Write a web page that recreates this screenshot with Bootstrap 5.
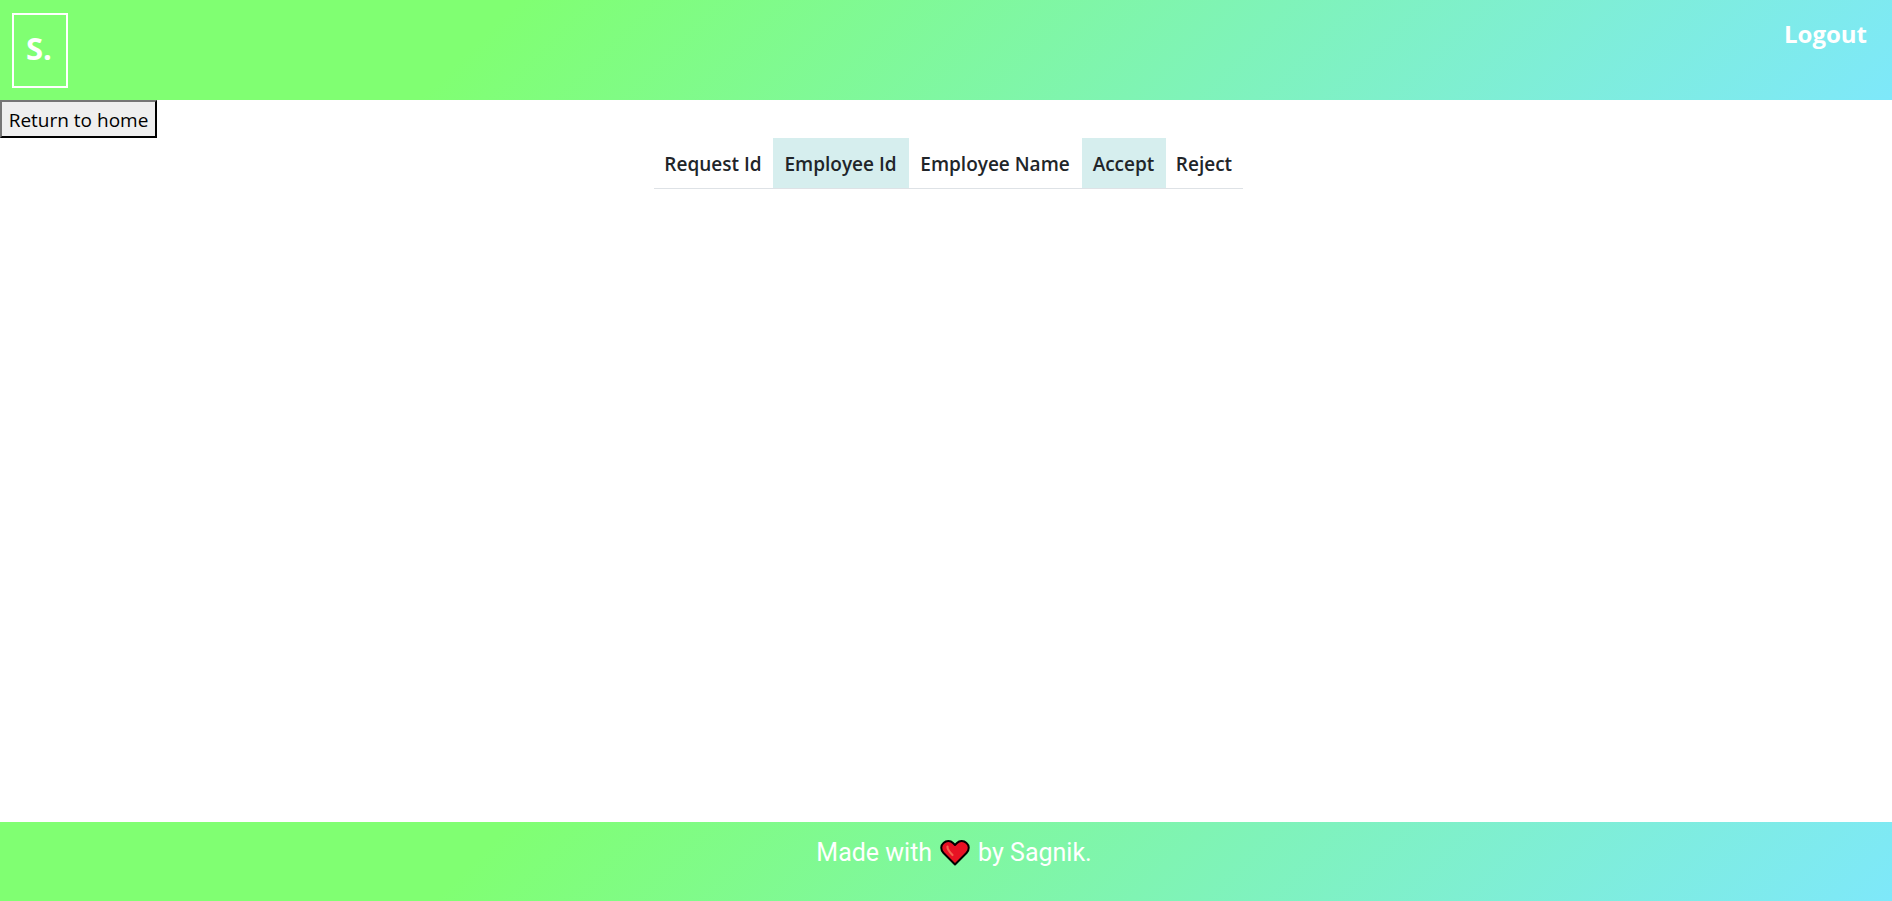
<!DOCTYPE html>
<html lang="en">
<head>
<meta charset="utf-8">
<meta name="viewport" content="width=device-width, initial-scale=1">
<title>Requests</title>
<link href="https://cdn.jsdelivr.net/npm/bootstrap@5.3.0/dist/css/bootstrap.min.css" rel="stylesheet">
<style>
  body { font-family: "Open Sans", "Noto Sans", sans-serif; font-size: 19px; }
  .brand-gradient { background: linear-gradient(315deg, #7ee8fa 0%, #80ff72 74%); }
  .site-header { padding: 13px 25px 12px 12px; }
  .logo-box { border: 2px solid #fff; padding: 12px 12px 17px; font-size: 31px; line-height: 42px; width: 56px; }
  .logout-link { font-size: 24px; line-height: 42px; }
  .home-button { border: 2px outset #212121; border-color: #767676 #212121 #212121 #767676; background: #efefef; color: #000; padding: 3px 6px 1px; line-height: 30px; width: 157px; }
  .table-area { padding-left: 4px; }
  .request-table { font-size: 19px; line-height: 34px; border-color: #dee2e6; }
  .request-table th { padding: 9px 8px 7px; font-weight: 600; color: #212529; white-space: nowrap; text-align: center; }
  .request-table th:nth-child(even) { background: #d6eeee; }
  .col-request { width: 119px; }
  .col-employee { width: 136px; }
  .col-name { width: 173px; }
  .col-accept { width: 84px; }
  .col-reject { width: 77px; }
  .site-footer { font-family: Roboto, sans-serif; font-size: 25px; line-height: 38px; padding: 12px 0 29px 16px; }
  .heart { width: 30px; height: 28px; }
</style>
</head>
<body class="d-flex flex-column min-vh-100 bg-white">
<header class="site-header brand-gradient d-flex justify-content-between align-items-start">
  <a href="#" class="logo-box text-white text-decoration-none fw-bold">S.</a>
  <a href="#" class="logout-link text-white text-decoration-none fw-bold">Logout</a>
</header>
<main class="flex-grow-1">
  <button type="button" class="home-button text-nowrap d-block">Return to home</button>
  <div class="table-area d-flex justify-content-center">
    <table class="request-table table w-auto mb-0">
      <colgroup><col class="col-request"><col class="col-employee"><col class="col-name"><col class="col-accept"><col class="col-reject"></colgroup>
      <thead>
        <tr>
          <th scope="col">Request Id</th>
          <th scope="col">Employee Id</th>
          <th scope="col">Employee Name</th>
          <th scope="col">Accept</th>
          <th scope="col">Reject</th>
        </tr>
      </thead>
    </table>
  </div>
</main>
<footer class="site-footer brand-gradient text-white d-flex justify-content-center align-items-center gap-2">
  <span>Made with</span>
  <svg class="heart" viewBox="0 0 30 28" role="img" aria-label="love">
    <path d="M15 25.500 3.500 14C.5 11 .5 6.500 3.500 4c3-2.700 7-2.400 9.500 0l2 2 2-2c2.500-2.400 6.500-2.700 9.500 0 3 2.500 3 7 0 10Z" fill="#e81224" stroke="#000" stroke-width="2" stroke-linejoin="round"/>
    <path d="M7.500 7.500c-.5 3 2 5.500 5 8.500" fill="none" stroke="#f4624e" stroke-width="2.200" stroke-linecap="round"/>
  </svg>
  <span>by Sagnik.</span>
</footer>
<script src="https://cdn.jsdelivr.net/npm/bootstrap@5.3.0/dist/js/bootstrap.bundle.min.js"></script>
</body>
</html>
